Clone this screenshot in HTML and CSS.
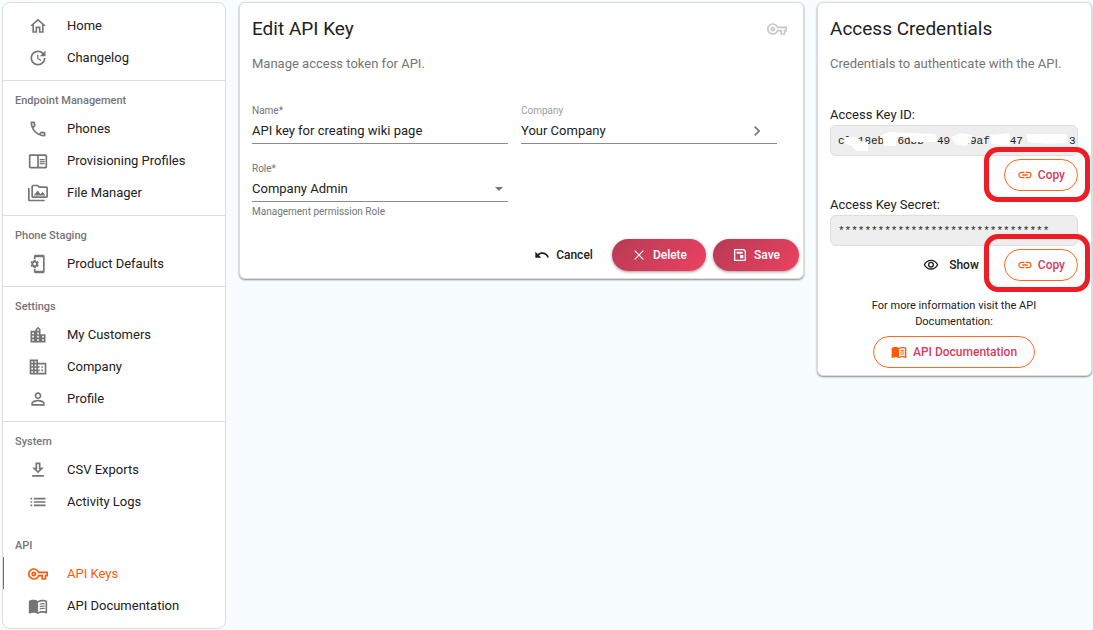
FILE: index.html
```html
<!DOCTYPE html>
<html lang="en">
<head>
  <meta charset="UTF-8">
  <meta name="viewport" content="width=device-width, initial-scale=1.0">
  <title>Edit API Key</title>
  <link rel="stylesheet" href="styles.css">
</head>
<body>
  <!-- Icons used more than once -->
  <svg class="sprite" aria-hidden="true">
    <symbol id="icon-key" viewBox="0 0 24 24">
      <path d="M22 19h-6v-4h-2.68c-1.14 2.42-3.6 4-6.32 4-3.86 0-7-3.14-7-7s3.14-7 7-7c2.72 0 5.17 1.58 6.32 4H24v6h-2v4zm-4-2h2v-4h2v-2H11.94l-.23-.67C11.01 8.34 9.11 7 7 7c-2.76 0-5 2.24-5 5s2.24 5 5 5c2.11 0 4.01-1.34 4.71-3.33l.23-.67H18v4zM7 15c-1.65 0-3-1.35-3-3s1.35-3 3-3 3 1.35 3 3-1.35 3-3 3zm0-4c-.55 0-1 .45-1 1s.45 1 1 1 1-.45 1-1-.45-1-1-1z"/>
    </symbol>
    <symbol id="icon-book" viewBox="0 0 24 24">
      <path d="M21 5c-1.11-.35-2.33-.5-3.5-.5-1.95 0-4.05.4-5.5 1.5-1.45-1.1-3.55-1.5-5.5-1.5S2.45 4.9 1 6v14.65c0 .25.25.5.5.5.1 0 .15-.05.25-.05C3.1 20.45 5.05 20 6.5 20c1.95 0 4.05.4 5.5 1.5 1.35-.85 3.8-1.5 5.5-1.5 1.65 0 3.35.3 4.75 1.05.1.05.15.05.25.05.25 0 .5-.25.5-.5V6c-.6-.45-1.25-.75-2-1zm0 13.5c-1.1-.35-2.3-.5-3.5-.5-1.7 0-4.15.65-5.5 1.5V8c1.35-.85 3.8-1.5 5.5-1.5 1.2 0 2.4.15 3.5.5v11.5z"/>
      <path d="M14 9.2c2-.8 4-.9 6-.5v1.5c-2-.4-4-.3-6 .5zM14 12c2-.8 4-.9 6-.5V13c-2-.4-4-.3-6 .5zM14 14.8c2-.8 4-.9 6-.5v1.5c-2-.4-4-.3-6 .5z"/>
    </symbol>
    <symbol id="icon-link" viewBox="0 0 24 24">
      <path d="M3.9 12c0-1.71 1.39-3.1 3.1-3.1h4V7H7c-2.76 0-5 2.24-5 5s2.24 5 5 5h4v-1.9H7c-1.71 0-3.1-1.39-3.1-3.1zM8 13h8v-2H8v2zm9-6h-4v1.9h4c1.71 0 3.1 1.39 3.1 3.1s-1.39 3.1-3.1 3.1h-4V17h4c2.76 0 5-2.24 5-5s-2.24-5-5-5z"/>
    </symbol>
  </svg>

  <div class="layout">
    <nav class="sidebar">
      <div class="nav-group nav-top">
        <a href="#" class="nav-item">
          <svg class="nav-icon" viewBox="0 0 24 24"><path fill="none" stroke="currentColor" stroke-width="1.9" d="M3.8 11.7L12 4.6l8.2 7.1M6.2 10v9.2H10v-5.6h4v5.6h3.8V10"/></svg>
          Home
        </a>
        <a href="#" class="nav-item">
          <svg class="nav-icon" viewBox="0 0 24 24"><path d="M11 8v5l4.25 2.52.77-1.28-3.52-2.09V8H11zm10 2V3l-2.64 2.64C16.74 4.01 14.49 3 12 3c-4.97 0-9 4.03-9 9s4.03 9 9 9 9-4.03 9-9h-2c0 3.86-3.14 7-7 7s-7-3.14-7-7 3.14-7 7-7c1.93 0 3.68.79 4.95 2.05L14 10h7z"/></svg>
          Changelog
        </a>
      </div>

      <div class="nav-group">
        <h2 class="nav-title">Endpoint Management</h2>
        <a href="#" class="nav-item">
          <svg class="nav-icon" viewBox="0 0 24 24"><path d="M6.54 5c.06.89.21 1.76.45 2.59l-1.2 1.2c-.41-1.2-.67-2.47-.76-3.79h1.51m9.86 12.02c.85.24 1.72.39 2.6.45v1.49c-1.32-.09-2.59-.35-3.8-.75l1.2-1.19M7.5 3H4c-.55 0-1 .45-1 1 0 9.39 7.61 17 17 17 .55 0 1-.45 1-1v-3.49c0-.55-.45-1-1-1-1.24 0-2.45-.2-3.57-.57-.1-.04-.21-.05-.31-.05-.26 0-.51.1-.71.29l-2.2 2.2c-2.83-1.45-5.15-3.76-6.59-6.59l2.2-2.2c.28-.28.36-.67.25-1.02C8.7 6.45 8.5 5.25 8.5 4c0-.55-.45-1-1-1z"/></svg>
          Phones
        </a>
        <a href="#" class="nav-item">
          <svg class="nav-icon" viewBox="0 0 24 24"><path d="M14 12h6v1.5h-6zm0-2.5h6V11h-6zm0 5h6V16h-6zM21 4H3c-1.1 0-2 .9-2 2v13c0 1.1.9 2 2 2h18c1.1 0 2-.9 2-2V6c0-1.1-.9-2-2-2zM11 19H3V6h8v13zm10 0h-8V6h8v13z"/></svg>
          Provisioning Profiles
        </a>
        <a href="#" class="nav-item">
          <svg class="nav-icon" viewBox="0 0 24 24"><path d="M2 6H0v5h.01L0 20c0 1.1.9 2 2 2h18v-2H2V6zm5 9h14l-3.5-4.5-2.5 3.01L11.5 9zM22 4h-8l-2-2H6c-1.1 0-1.99.9-1.99 2L4 16c0 1.1.9 2 2 2h16c1.1 0 2-.9 2-2V6c0-1.1-.9-2-2-2zm0 12H6V4h5.17l1.41 1.41.59.59H22v10z"/></svg>
          File Manager
        </a>
      </div>

      <div class="nav-group">
        <h2 class="nav-title">Phone Staging</h2>
        <a href="#" class="nav-item">
          <svg class="nav-icon" viewBox="0 0 24 24"><path d="M11.82 12.49c.02-.16.04-.32.04-.49 0-.17-.02-.33-.04-.49l1.08-.82c.1-.07.12-.21.06-.32l-1.03-1.73c-.06-.11-.2-.15-.31-.11l-1.28.5c-.27-.2-.56-.36-.87-.49l-.2-1.33c0-.12-.11-.21-.24-.21H6.98c-.13 0-.24.09-.26.21l-.2 1.32c-.31.12-.6.3-.87.49l-1.28-.5c-.12-.05-.25 0-.31.11l-1.03 1.73c-.06.12-.03.25.07.33l1.08.82c-.02.16-.03.33-.03.49 0 .17.02.33.04.49l-1.09.83c-.1.07-.12.21-.06.32l1.03 1.73c.06.11.2.15.31.11l1.28-.5c.27.2.56.36.87.49l.2 1.32c.01.12.12.21.25.21h2.06c.13 0 .24-.09.25-.21l.2-1.32c.31-.12.6-.3.87-.49l1.28.5c.12.05.25 0 .31-.11l1.03-1.73c.06-.11.04-.24-.06-.32l-1.1-.83zM8 13.67c-.92 0-1.67-.75-1.67-1.67S7.08 10.33 8 10.33 9.67 11.08 9.67 12 8.92 13.67 8 13.67zM18 1.01L9 1c-1.1 0-2 .9-2 2v3h2V4h9v16H9v-2H7v3c0 1.1.9 2 2 2h9c1.1 0 2-.9 2-2V3c0-1.1-.9-1.99-2-1.99z"/></svg>
          Product Defaults
        </a>
      </div>

      <div class="nav-group">
        <h2 class="nav-title">Settings</h2>
        <a href="#" class="nav-item">
          <svg class="nav-icon" viewBox="0 0 24 24"><path d="M15 11V5l-3-3-3 3v2H3v14h18V11h-6zm-8 8H5v-2h2v2zm0-4H5v-2h2v2zm0-4H5V9h2v2zm6 8h-2v-2h2v2zm0-4h-2v-2h2v2zm0-4h-2V9h2v2zm0-4h-2V5h2v2zm6 12h-2v-2h2v2zm0-4h-2v-2h2v2z"/></svg>
          My Customers
        </a>
        <a href="#" class="nav-item">
          <svg class="nav-icon" viewBox="0 0 24 24"><path d="M12 7V3H2v18h20V7H12zM6 19H4v-2h2v2zm0-4H4v-2h2v2zm0-4H4V9h2v2zm0-4H4V5h2v2zm4 12H8v-2h2v2zm0-4H8v-2h2v2zm0-4H8V9h2v2zm0-4H8V5h2v2zm10 12h-8v-2h2v-2h-2v-2h2v-2h-2V9h8v10zm-2-8h-2v2h2v-2zm0 4h-2v2h2v-2z"/></svg>
          Company
        </a>
        <a href="#" class="nav-item">
          <svg class="nav-icon" viewBox="0 0 24 24"><path d="M12 5.9a2.1 2.1 0 110 4.2 2.1 2.1 0 010-4.2m0 9c2.97 0 6.1 1.46 6.1 2.1v1.1H5.9V17c0-.64 3.13-2.1 6.1-2.1M12 4C9.79 4 8 5.79 8 8s1.79 4 4 4 4-1.79 4-4-1.79-4-4-4zm0 9c-2.67 0-8 1.34-8 4v3h16v-3c0-2.66-5.33-4-8-4z"/></svg>
          Profile
        </a>
      </div>

      <div class="nav-group">
        <h2 class="nav-title">System</h2>
        <a href="#" class="nav-item">
          <svg class="nav-icon" viewBox="0 0 24 24"><path d="M13 5v6h1.17L12 13.17 9.83 11H11V5h2m2-2H9v6H5l7 7 7-7h-4V3zm4 15H5v2h14v-2z"/></svg>
          CSV Exports
        </a>
        <a href="#" class="nav-item">
          <svg class="nav-icon" viewBox="0 0 24 24"><path d="M3 13h2v-2H3v2zm0 4h2v-2H3v2zm0-8h2V7H3v2zm4 4h14v-2H7v2zm0 4h14v-2H7v2zM7 7v2h14V7H7z"/></svg>
          Activity Logs
        </a>
      </div>

      <div class="nav-group nav-plain">
        <h2 class="nav-title">API</h2>
        <a href="#" class="nav-item active">
          <svg class="nav-icon"><use href="#icon-key"/></svg>
          API Keys
        </a>
        <a href="#" class="nav-item">
          <svg class="nav-icon"><use href="#icon-book"/></svg>
          API Documentation
        </a>
      </div>
    </nav>

    <main class="card">
      <div class="card-header">
        <h1>Edit API Key</h1>
        <svg class="header-icon"><use href="#icon-key"/></svg>
      </div>
      <p class="subtitle">Manage access token for API.</p>

      <form>
        <div class="fields">
          <div class="field">
            <label for="keyName">Name*</label>
            <input type="text" id="keyName" value="API key for creating wiki page">
          </div>
          <div class="field">
            <label for="company" class="label-light">Company</label>
            <div class="control">
              <input type="text" id="company" value="Your Company" readonly>
              <svg class="chevron" viewBox="0 0 24 24"><path d="M10 6L8.59 7.41 13.17 12l-4.58 4.59L10 18l6-6z"/></svg>
            </div>
          </div>
          <div class="field">
            <label for="role">Role*</label>
            <div class="control">
              <select id="role">
                <option>Company Admin</option>
              </select>
              <svg class="arrow" viewBox="0 0 8 4"><path d="M0 0h8L4 4z"/></svg>
            </div>
            <small>Management permission Role</small>
          </div>
        </div>

        <div class="actions">
          <button type="button" class="btn btn-text">
            <svg viewBox="0 0 24 24"><path d="M12.5 8c-2.65 0-5.05.99-6.9 2.6L2 7v9h9l-3.62-3.62c1.39-1.16 3.16-1.88 5.12-1.88 3.54 0 6.55 2.31 7.6 5.5l2.37-.78C21.08 11.03 17.15 8 12.5 8z"/></svg>
            Cancel
          </button>
          <button type="button" class="btn btn-fill">
            <svg viewBox="0 0 24 24"><path fill="none" stroke="currentColor" stroke-width="1.7" d="M5.5 5.5l13 13M18.5 5.5l-13 13"/></svg>
            Delete
          </button>
          <button type="button" class="btn btn-fill">
            <svg viewBox="0 0 24 24"><path d="M3 3v18h18V6l-3-3H3zm16 16H5V5h12.2L19 6.8V19zM7 7h9v3H7zM12 12h5v5h-5z"/></svg>
            Save
          </button>
        </div>
      </form>
    </main>

    <aside class="card">
      <div class="card-header">
        <h1>Access Credentials</h1>
      </div>
      <p class="subtitle">Credentials to authenticate with the API.</p>

      <div class="credential">
        <label for="keyId">Access Key ID:</label>
        <div class="key-box">
          <input type="text" id="keyId" value="cl 18eb 76dbb  49  49af   47       3" readonly>
          <svg class="mask" viewBox="0 0 248 31">
            <path d="M15 12h11l3 4 9 1v9H27l-7-6-5-1zM52 10l7-3 46 2 3 4-2 4H82l-3-5H67l-1 9H54zM121 12l10-4 11 2v5l-6 6-11-2zM160 10l19-2 1 5-1 8-18-2zM196 9h40l2 3-2 6-20 1-18-2z"/>
          </svg>
        </div>
        <div class="credential-actions">
          <div class="copy-wrap">
            <button type="button" class="btn btn-outline"><svg><use href="#icon-link"/></svg>Copy</button>
            <span class="highlight"></span>
          </div>
        </div>
      </div>

      <div class="credential">
        <label for="keySecret">Access Key Secret:</label>
        <div class="key-box">
          <input type="text" id="keySecret" value="********************************" readonly>
        </div>
        <div class="credential-actions">
          <button type="button" class="btn btn-text btn-show">
            <svg viewBox="0 0 24 24"><path d="M12 6c3.79 0 7.17 2.13 8.82 5.5C19.17 14.87 15.79 17 12 17s-7.17-2.13-8.82-5.5C4.83 8.13 8.21 6 12 6m0-2C7 4 2.73 7.11 1 11.5 2.73 15.89 7 19 12 19s9.27-3.11 11-7.5C21.27 7.11 17 4 12 4zm0 5a2.5 2.5 0 010 5 2.5 2.5 0 010-5m0-2a4.5 4.5 0 100 9 4.5 4.5 0 000-9z"/></svg>
            Show
          </button>
          <div class="copy-wrap">
            <button type="button" class="btn btn-outline"><svg><use href="#icon-link"/></svg>Copy</button>
            <span class="highlight highlight-tall"></span>
          </div>
        </div>
      </div>

      <div class="docs">
        <p>For more information visit the API Documentation:</p>
        <a href="#" class="btn btn-outline btn-docs"><svg><use href="#icon-book"/></svg>API Documentation</a>
      </div>
    </aside>
  </div>
</body>
</html>
```
FILE: styles.css
```css
* {
  box-sizing: border-box;
}
body {
  margin: 0;
  padding: 2px 1px 2px 2px;
  background: #f7fcff;
  color: #212121;
  font-family: Roboto, sans-serif;
  font-size: 13px;
  line-height: 16px;
}
h1, h2, p {
  margin: 0;
}
svg {
  fill: currentColor;
  flex-shrink: 0;
}
.sprite {
  display: none;
}
.layout {
  display: grid;
  grid-template-columns: 224px 1fr 275px;
  gap: 13px;
  align-items: start;
}

/* Sidebar */
.sidebar {
  background: white;
  border: 1px solid #dcdcdc;
  border-radius: 8px;
}
.nav-group {
  padding-bottom: 7px;
  border-top: 1px solid #dcdcdc;
}
.nav-top {
  padding-top: 6px;
  border-top: none;
}
.nav-plain {
  border-top: 2px solid transparent;
}
.nav-title {
  padding: 12px 12px 3px;
  color: #757575;
  font-size: 11px;
  font-weight: 500;
}
.nav-item {
  display: flex;
  align-items: center;
  gap: 19px;
  height: 32px;
  padding: 2px 0 0 25px;
  color: #212121;
  text-decoration: none;
}
.nav-icon {
  width: 20px;
  height: 20px;
  color: #757575;
}
.nav-item.active {
  color: #ff5a0a;
  box-shadow: inset 1px 0 #b8562c;
}
.nav-item.active .nav-icon {
  color: #ff5a0a;
}

/* Cards */
.card {
  padding: 14px 13px 7px 12px;
  background: white;
  border: 1px solid #dcdcdc;
  border-radius: 6px;
  box-shadow: 0 1px 2px rgba(0,0,0,0.45);
}
.card-header {
  display: flex;
  justify-content: space-between;
  align-items: center;
}
h1 {
  font-size: 19px;
  font-weight: 400;
  line-height: 24px;
}
.header-icon {
  width: 20px;
  height: 20px;
  margin-right: 3px;
  color: #c8c8c8;
}
.subtitle {
  margin-top: 15px;
  color: #757575;
}

/* Form */
.fields {
  display: grid;
  grid-template-columns: 1fr 1fr;
  gap: 17px 13px;
  margin-top: 31px;
  padding-right: 13px;
}
.field label, .field small {
  display: block;
  color: #757575;
  font-size: 10px;
}
.field .label-light {
  color: #9e9e9e;
}
.field small {
  margin-top: 2px;
}
.field input, .field select {
  display: block;
  width: 100%;
  height: 25px;
  padding: 0 0 1px;
  border: none;
  border-bottom: 1px solid #8c8c8c;
  border-radius: 0;
  outline: none;
  background: transparent;
  color: #212121;
  font: inherit;
  appearance: none;
}
.control {
  position: relative;
}
.chevron, .arrow {
  position: absolute;
  color: #757575;
  pointer-events: none;
}
.chevron {
  top: 2px;
  right: 10px;
  width: 20px;
  height: 20px;
}
.arrow {
  top: 10px;
  right: 5px;
  width: 8px;
  height: 4px;
}

/* Buttons */
.btn {
  display: flex;
  align-items: center;
  height: 32px;
  border: none;
  border-radius: 16px;
  background: none;
  font-family: inherit;
  font-size: 12px;
  font-weight: 500;
  text-decoration: none;
  cursor: pointer;
}
.btn svg {
  width: 16px;
  height: 16px;
}
.btn-text {
  gap: 6px;
  padding: 0 12px;
  color: #212121;
}
.btn-fill {
  gap: 6px;
  padding: 0 19px;
  background: linear-gradient(135deg, #b63b55, #ec4161);
  color: white;
  box-shadow: 0 1px 3px rgba(0,0,0,0.4);
}
.btn-outline {
  gap: 5px;
  padding: 0 12px;
  border: 1px solid #ff6a1f;
  color: #d63c5e;
}
.btn-outline svg {
  color: #ff5a0a;
}
.btn-show {
  gap: 10px;
}
.btn-docs {
  gap: 6px;
  padding: 0 17px;
}
.actions {
  display: flex;
  justify-content: flex-end;
  gap: 7px;
  margin: 19px -9px 0 0;
}

/* Credentials */
.credential {
  margin-top: 35px;
}
.credential + .credential {
  margin-top: 6px;
}
.credential label {
  display: block;
}
.key-box {
  position: relative;
  margin-top: 2px;
}
.key-box input {
  display: block;
  width: 100%;
  height: 31px;
  padding: 0 0 0 7px;
  border: 1px solid #dedede;
  border-radius: 6px;
  outline: none;
  background: #eeeeee;
  color: #212121;
  font-family: "Liberation Mono", monospace;
  font-size: 11px;
}
.mask {
  position: absolute;
  top: 0;
  left: 0;
  width: 100%;
  height: 100%;
  fill: white;
}
.credential-actions {
  display: flex;
  justify-content: flex-end;
  gap: 13px;
  margin-top: 3px;
}
.copy-wrap {
  position: relative;
}
.highlight {
  position: absolute;
  inset: -12px -12px -11px -20px;
  border: 5px solid #ee1c25;
  border-radius: 14px;
  pointer-events: none;
}
.highlight-tall {
  top: -15px;
}
.docs {
  display: flex;
  flex-direction: column;
  align-items: center;
  gap: 6px;
  margin-top: 17px;
  padding: 0 24px;
  font-size: 11px;
  text-align: center;
}
```
